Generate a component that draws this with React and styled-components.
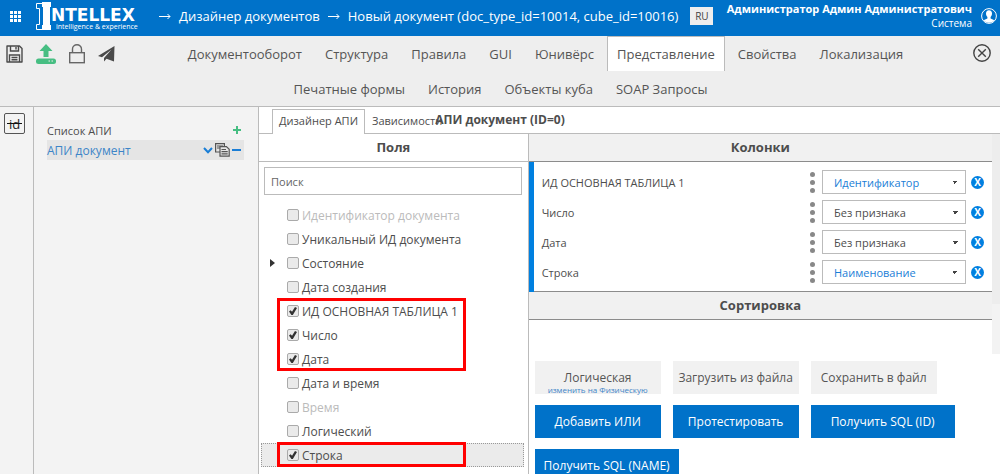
import { useState } from 'react';
import styled, { createGlobalStyle } from 'styled-components';

const navTop = ['Документооборот', 'Структура', 'Правила', 'GUI', 'Юнивёрс', 'Представление', 'Свойства', 'Локализация'];
const navBottom = ['Печатные формы', 'История', 'Объекты куба', 'SOAP Запросы'];

const fieldGroups = [
    {
        rows: [
            { name: 'Идентификатор документа', disabled: true },
            { name: 'Уникальный ИД документа' },
            { name: 'Состояние', expandable: true },
            { name: 'Дата создания' },
        ],
    },
    {
        marked: true,
        rows: [
            { name: 'ИД ОСНОВНАЯ ТАБЛИЦА 1', checked: true },
            { name: 'Число', checked: true },
            { name: 'Дата', checked: true },
        ],
    },
    {
        rows: [
            { name: 'Дата и время' },
            { name: 'Время', disabled: true },
            { name: 'Логический' },
        ],
    },
    {
        marked: true,
        rows: [{ name: 'Строка', checked: true, current: true }],
    },
];

const columns = [
    { name: 'ИД ОСНОВНАЯ ТАБЛИЦА 1', sign: 'Идентификатор' },
    { name: 'Число', sign: 'Без признака' },
    { name: 'Дата', sign: 'Без признака' },
    { name: 'Строка', sign: 'Наименование' },
];

const signs = ['Без признака', 'Идентификатор', 'Наименование'];

function LogoMark() {
    return (
        <svg width="15" height="28" viewBox="0 0 15 28" aria-hidden="true">
            <path d="M8 1.5H0.5V6.5H3.5V22.5H0.5V27.5H8" fill="none" stroke="#fff" strokeWidth="1" />
            <path d="M6 0H15V5H14V23H15V28H6V23H7V5H6Z" fill="#fff" />
        </svg>
    );
}

function SaveIcon() {
    return (
        <svg width="17" height="18" viewBox="0 0 17 18" fill="none" stroke="#4a4a4a" strokeWidth="1.4">
            <path d="M1 1H13.5L16 3.5V17H1Z" strokeLinejoin="round" />
            <path d="M4.5 1V6H12.5V1M10 2V4.5M3.5 17V10H13.5V17M5.5 12.5H11.5M5.5 14.7H11.5" />
        </svg>
    );
}

function UploadIcon() {
    return (
        <svg width="20" height="20" viewBox="0 0 20 20" fill="#46be82">
            <path d="M10 0L16.5 7H12.5V13H7.5V7H3.5Z" />
            <rect x="0" y="14.5" width="20" height="5.5" rx="2.5" />
            <path d="M12.5 17H14M15.5 17H17" stroke="#ededed" strokeWidth="1" />
        </svg>
    );
}

function LockIcon() {
    return (
        <svg width="16" height="20" viewBox="0 0 16 20" fill="none" stroke="#666" strokeWidth="1.4">
            <rect x="0.7" y="8.7" width="14.6" height="10" />
            <path d="M3.5 8.5V5A4.5 4.2 0 0 1 12.5 5V8.5" />
        </svg>
    );
}

function SendIcon() {
    return (
        <svg width="17" height="16" viewBox="0 0 17 16" fill="#4a4a4a">
            <path d="M16.5 0L0 10L4 11.2L13.5 3.5L6 12V15.5L8.5 12.7L16 15.5Z" />
        </svg>
    );
}

function CloseIcon() {
    return (
        <svg width="18" height="18" viewBox="0 0 18 18" fill="none" stroke="#444" strokeWidth="1.4">
            <circle cx="9" cy="9" r="8.2" />
            <path d="M5.2 5.2L12.8 12.8M12.8 5.2L5.2 12.8" />
        </svg>
    );
}

function UserIcon() {
    return (
        <svg width="16" height="16" viewBox="0 0 16 16">
            <circle cx="8" cy="8" r="7.4" fill="none" stroke="#fff" strokeWidth="1" />
            <path d="M8 2.2C10 2.2 11 3.6 11 5.6C11 7.2 10.4 8.4 9.6 9V10.4L13.4 12.2A7 7 0 0 1 2.6 12.2L6.4 10.4V9C5.6 8.4 5 7.2 5 5.6C5 3.6 6 2.2 8 2.2Z" fill="#fff" />
        </svg>
    );
}

function CopyIcon() {
    return (
        <svg width="15" height="14" viewBox="0 0 15 14" fill="#e5e5e5" stroke="#555" strokeWidth="1.2">
            <path d="M0.6 0.6H9.4V9H0.6Z" />
            <path d="M2 3H8M2 5H8" />
            <path d="M5 3.6H11.4L14.2 6.2V13.2H5Z" />
            <path d="M6.5 6.5H11M6.5 8.7H12.7M6.5 10.9H12.7" />
        </svg>
    );
}

function Arrow() {
    return (
        <svg width="12" height="7" viewBox="0 0 12 7" fill="none" stroke="#fff" strokeWidth="1">
            <path d="M0 3.5H11M8.5 1L11 3.5L8.5 6" />
        </svg>
    );
}

function App() {
    const [search, setSearch] = useState('');

    return (
        <Page>
            <GlobalStyle />
            <Header>
                <IconButton aria-label="Меню">
                    <svg width="12" height="11" viewBox="0 0 12 11" fill="#fff">
                        {[0, 4, 8].map((y) => [0, 4, 8].map((x) => (
                            <rect key={`${x}-${y}`} x={x} y={y} width="3" height="3" />
                        )))}
                    </svg>
                </IconButton>
                <Logo href="#">
                    <LogoMark />
                    <LogoText>
                        <LogoName>NTELLEX</LogoName>
                        <LogoSlogan>intelligence &amp; experience</LogoSlogan>
                    </LogoText>
                </Logo>
                <Crumbs>
                    <Arrow />
                    <a href="#">Дизайнер документов</a>
                    <Arrow />
                    <a href="#">Новый документ (doc_type_id=10014, cube_id=10016)</a>
                </Crumbs>
                <Language>RU</Language>
                <User>
                    <strong>Администратор Админ Администратович</strong>
                    <span>Система</span>
                </User>
                <UserIcon />
            </Header>

            <Toolbar>
                <Tools>
                    <IconButton aria-label="Сохранить"><SaveIcon /></IconButton>
                    <IconButton aria-label="Выгрузить"><UploadIcon /></IconButton>
                    <IconButton aria-label="Заблокировать"><LockIcon /></IconButton>
                    <IconButton aria-label="Отправить"><SendIcon /></IconButton>
                </Tools>
                <Nav>
                    <NavRow>
                        {navTop.map((item) => (
                            <NavLink key={item} href="#" $active={item === 'Представление'}>{item}</NavLink>
                        ))}
                    </NavRow>
                    <NavRow $second>
                        {navBottom.map((item) => (
                            <NavLink key={item} href="#">{item}</NavLink>
                        ))}
                    </NavRow>
                </Nav>
                <CloseBox>
                    <IconButton aria-label="Закрыть"><CloseIcon /></IconButton>
                </CloseBox>
            </Toolbar>

            <Body>
                <Rail>
                    <IdButton>id</IdButton>
                </Rail>
                <ApiPanel>
                    <ApiRow>
                        <span>Список АПИ</span>
                        <IconButton aria-label="Добавить">
                            <svg width="8" height="8" viewBox="0 0 8 8" stroke="#46be82" strokeWidth="2"><path d="M4 0V8M0 4H8" /></svg>
                        </IconButton>
                    </ApiRow>
                    <ApiRow $selected>
                        <a href="#">АПИ документ</a>
                        <ApiActions>
                            <IconButton aria-label="Раскрыть">
                                <svg width="10" height="7" viewBox="0 0 10 7" fill="none" stroke="#1a7ed6" strokeWidth="2"><path d="M1 1L5 5.3L9 1" /></svg>
                            </IconButton>
                            <IconButton aria-label="Копировать"><CopyIcon /></IconButton>
                            <IconButton aria-label="Удалить">
                                <svg width="9" height="2" viewBox="0 0 9 2"><rect width="9" height="2" fill="#1a7ed6" /></svg>
                            </IconButton>
                        </ApiActions>
                    </ApiRow>
                </ApiPanel>

                <Designer>
                    <Tabs>
                        <Tab $active>Дизайнер АПИ</Tab>
                        <Tab>Зависимости</Tab>
                        <Title>АПИ документ (ID=0)</Title>
                    </Tabs>
                    <Panes>
                        <Fields>
                            <PaneTitle>Поля</PaneTitle>
                            <Search
                                aria-label="Поиск"
                                placeholder="Поиск"
                                value={search}
                                onChange={(e) => setSearch(e.target.value)}
                            />
                            <FieldList>
                                {fieldGroups.map((group, i) => (
                                    <FieldGroup key={i}>
                                        {group.rows.map((row) => (
                                            <Field key={row.name} $current={row.current} $disabled={row.disabled}>
                                                <Expander>{row.expandable && <Triangle />}</Expander>
                                                <Checkbox type="checkbox" defaultChecked={row.checked} disabled={row.disabled} />
                                                {row.name}
                                            </Field>
                                        ))}
                                        {group.marked && <Frame />}
                                    </FieldGroup>
                                ))}
                            </FieldList>
                        </Fields>

                        <Settings>
                            <Scroller>
                                <ScrollContent>
                                    <PaneTitle $grey>Колонки</PaneTitle>
                                    <ColumnList>
                                        {columns.map((column) => (
                                            <Column key={column.name}>
                                                <ColumnName htmlFor={column.name}>{column.name}</ColumnName>
                                                <Grip><i /><i /><i /></Grip>
                                                <Select id={column.name} defaultValue={column.sign} $set={column.sign !== 'Без признака'}>
                                                    {signs.map((sign) => <option key={sign}>{sign}</option>)}
                                                </Select>
                                                <Remove aria-label="Убрать колонку">X</Remove>
                                            </Column>
                                        ))}
                                    </ColumnList>
                                    <PaneTitle $grey>Сортировка</PaneTitle>
                                </ScrollContent>
                                <ScrollTrack><ScrollThumb /></ScrollTrack>
                            </Scroller>
                            <Actions>
                                <Action>
                                    Логическая
                                    <Hint>изменить на Физическую</Hint>
                                </Action>
                                <Action>Загрузить из файла</Action>
                                <Action>Сохранить в файл</Action>
                                <Action $primary>Добавить ИЛИ</Action>
                                <Action $primary>Протестировать</Action>
                                <Action $primary $wide>Получить SQL (ID)</Action>
                                <Action $primary $wide>Получить SQL (NAME)</Action>
                            </Actions>
                        </Settings>
                    </Panes>
                </Designer>
            </Body>
        </Page>
    );
}

export default App;

const GlobalStyle = createGlobalStyle`
    * {
        box-sizing: border-box;
    }
    body {
        margin: 0;
        overflow: hidden;
        background: white;
        color: #4d4d4d;
        font-family: 'Open Sans', sans-serif;
        font-size: 12px;
    }
    button, input, select {
        font-family: inherit;
        color: inherit;
    }
    a {
        color: inherit;
        text-decoration: none;
    }
    svg {
        display: block;
        flex: none;
    }
`;

const Page = styled.div`
    display: flex;
    flex-direction: column;
    height: 100vh;
`;

const Header = styled.header`
    display: flex;
    align-items: center;
    flex: none;
    height: 36px;
    padding: 0 3px 4px 10px;
    background: #0072c9;
    color: white;
`;

const IconButton = styled.button`
    display: flex;
    padding: 0;
    border: none;
    background: none;
    cursor: pointer;
`;

const Logo = styled.a`
    display: flex;
    margin-left: 14px;
`;

const LogoText = styled.span`
    display: flex;
    flex-direction: column;
    width: 86px;
    padding-top: 5px;
    white-space: nowrap;
`;

const LogoName = styled.span`
    font-family: 'DejaVu Sans', sans-serif;
    font-size: 17px;
    font-weight: bold;
    line-height: 16px;
`;

const LogoSlogan = styled.span`
    padding-left: 5px;
    font-size: 7px;
    line-height: 8px;
`;

const Crumbs = styled.nav`
    display: flex;
    align-items: center;
    gap: 8px;
    margin-left: 22px;
    font-size: 13px;
    white-space: nowrap;
`;

const Language = styled.button`
    flex: none;
    width: 23px;
    height: 18px;
    margin-left: 12px;
    padding: 0;
    border: none;
    background: #eee;
    color: #444;
    font-size: 10px;
`;

const User = styled.div`
    display: flex;
    flex-direction: column;
    align-items: flex-end;
    flex: 1;
    margin-right: 9px;
    font-size: 11px;
    line-height: 15px;
    white-space: nowrap;

    span {
        font-size: 10px;
    }
`;

const Toolbar = styled.div`
    display: flex;
    flex: none;
    background: #eee;
    border-bottom: 1px solid #bbb;
`;

const Tools = styled.div`
    display: flex;
    align-items: center;
    gap: 13px;
    width: 118px;
    height: 35px;
    padding-left: 6px;
`;

const Nav = styled.nav`
    flex: 1;
`;

const NavRow = styled.div`
    display: flex;
    justify-content: center;
    gap: 3px;
    height: 35px;
    padding-right: ${({ $second }) => ($second ? 90 : 0)}px;
`;

const NavLink = styled.a`
    display: flex;
    align-items: center;
    padding: 0 9px;
    border: 1px solid ${({ $active }) => ($active ? '#bbb' : 'transparent')};
    border-bottom: none;
    background: ${({ $active }) => ($active ? 'white' : 'none')};
    color: #555;
    font-size: 13px;
`;

const CloseBox = styled.div`
    display: flex;
    align-items: center;
    height: 33px;
    padding-right: 9px;
`;

const Body = styled.main`
    display: flex;
    flex: 1;
    min-height: 0;
`;

const Rail = styled.aside`
    flex: none;
    width: 34px;
    padding: 6px 4px;
    border-right: 1px solid #bbb;
    background: #f3f3f3;
`;

const IdButton = styled.button`
    position: relative;
    width: 21px;
    height: 21px;
    padding: 0;
    border: 1px solid #555;
    border-radius: 2px;
    background: none;
    color: #222;
    font-size: 13px;
    line-height: 18px;

    &::after {
        content: '';
        position: absolute;
        inset: 9px 2px auto;
        height: 1px;
        background: #111;
    }
`;

const ApiPanel = styled.aside`
    flex: none;
    width: 225px;
    padding: 13px 14px 0 13px;
    border-right: 1px solid #bbb;
    background: #f3f3f3;
`;

const ApiRow = styled.div`
    display: flex;
    align-items: center;
    justify-content: space-between;
    height: 20px;
    padding-right: 3px;
    background: ${({ $selected }) => ($selected ? '#e5e5e5' : 'none')};
    color: ${({ $selected }) => ($selected ? '#3d85c8' : '#4d4d4d')};
    font-size: ${({ $selected }) => ($selected ? 12 : 11)}px;
`;

const ApiActions = styled.div`
    display: flex;
    align-items: center;
    gap: 2px;
`;

const Designer = styled.section`
    display: flex;
    flex-direction: column;
    flex: 1;
    min-width: 0;
`;

const Tabs = styled.div`
    display: flex;
    flex: none;
    height: 27px;
    padding: 2px 0 0 13px;
    border-bottom: 1px solid #bbb;
`;

const Tab = styled.button`
    height: 25px;
    padding: 0 6px 4px;
    border: 1px solid ${({ $active }) => ($active ? '#bbb' : 'transparent')};
    border-bottom: none;
    background: ${({ $active }) => ($active ? 'white' : 'none')};
    font-size: 11px;
`;

const Title = styled.h1`
    margin: 0 0 0 -14px;
    font-size: 12px;
    line-height: 22px;
`;

const Panes = styled.div`
    display: flex;
    flex: 1;
    min-height: 0;
`;

const Fields = styled.section`
    flex: 269;
    min-width: 0;
    border-right: 1px solid #bbb;
`;

const PaneTitle = styled.h2`
    height: 28px;
    margin: 0;
    border-bottom: 1px solid ${({ $grey }) => ($grey ? '#8c8c8c' : '#bbb')};
    background: ${({ $grey }) => ($grey ? '#f1f1f1' : 'white')};
    font-size: 13px;
    line-height: 27px;
    text-align: center;
`;

const Search = styled.input`
    display: block;
    width: calc(100% - 11px);
    height: 28px;
    margin: 5px;
    padding: 0 6px;
    border: 1px solid #bbb;
    font-size: 11px;

    &::placeholder {
        color: #666;
    }
`;

const FieldList = styled.div`
    padding: 3px 4px 0 2px;
`;

const FieldGroup = styled.div`
    position: relative;
`;

const Field = styled.label`
    display: flex;
    align-items: center;
    height: 24px;
    border: 1px dotted ${({ $current }) => ($current ? '#999' : 'transparent')};
    background: ${({ $current }) => ($current ? '#ebebeb' : 'none')};
    color: ${({ $disabled }) => ($disabled ? '#bbb' : '#4d4d4d')};
`;

const Expander = styled.span`
    width: 25px;
    padding-left: 8px;
`;

const Triangle = styled.span`
    display: block;
    width: 0;
    border: 4px solid transparent;
    border-left: 5px solid #333;
    border-right: none;
`;

const Checkbox = styled.input`
    appearance: none;
    width: 12px;
    height: 12px;
    margin: 0 3px 0 0;
    border: 1px solid #aaa;
    border-radius: 2px;
    background: #eaeaea;

    &:checked::before {
        content: '';
        display: block;
        width: 8px;
        height: 8px;
        margin: 1px;
        background: #333;
        clip-path: polygon(0 55%, 20% 40%, 38% 60%, 75% 0, 100% 12%, 48% 100%, 30% 100%);
    }
`;

const Frame = styled.div`
    position: absolute;
    inset: -1px 58px 0 16px;
    border: 3px solid #f00;
    pointer-events: none;
`;

const Settings = styled.section`
    flex: 472;
    min-width: 0;
`;

const Scroller = styled.div`
    display: flex;
    height: 220px;
`;

const ScrollContent = styled.div`
    flex: 1;
`;

const ScrollTrack = styled.div`
    width: 8px;
    background: #f3f3f3;
`;

const ScrollThumb = styled.div`
    height: 170px;
    background: #ededed;
`;

const ColumnList = styled.div`
    display: flex;
    flex-direction: column;
    gap: 6px;
    padding: 8px;
    border-left: 5px solid #0080e0;
    box-shadow: inset 0 -1px #8c8c8c;
`;

const Column = styled.div`
    display: flex;
    align-items: center;
    height: 24px;
`;

const ColumnName = styled.label`
    flex: 1;
    font-size: 11px;
`;

const Grip = styled.span`
    display: flex;
    flex-direction: column;
    gap: 3px;
    margin-right: 7px;

    i {
        width: 5px;
        height: 5px;
        border-radius: 50%;
        background: #888;
    }
`;

const Select = styled.select`
    appearance: none;
    width: 144px;
    height: 24px;
    padding: 0 11px;
    border: 1px solid #bbb;
    background:
        linear-gradient(to bottom left, #444 50%, transparent 50%) no-repeat right 10px center / 3px 3px,
        linear-gradient(to bottom right, #444 50%, transparent 50%) no-repeat right 7px center / 3px 3px,
        white;
    color: ${({ $set }) => ($set ? '#1a7ed6' : '#4d4d4d')};
    font-size: 11px;
`;

const Remove = styled.button`
    width: 13px;
    height: 13px;
    margin-left: 5px;
    padding: 0;
    border: none;
    border-radius: 50%;
    background: #0080e0;
    color: white;
    font-size: 10px;
    font-weight: bold;
    line-height: 13px;
`;

const Actions = styled.div`
    display: flex;
    flex-wrap: wrap;
    gap: 11px 12px;
    padding: 7px 40px 0 6px;
`;

const Action = styled.button`
    display: flex;
    flex-direction: column;
    align-items: center;
    justify-content: center;
    width: ${({ $wide }) => ($wide ? 144 : 126)}px;
    height: 33px;
    padding: 0;
    border: none;
    background: ${({ $primary }) => ($primary ? '#0072c9' : '#f1f1f1')};
    color: ${({ $primary }) => ($primary ? 'white' : '#555')};
    font-size: 12px;
    font-weight: ${({ $primary }) => ($primary ? 500 : 400)};
    white-space: nowrap;
`;

const Hint = styled.span`
    margin-bottom: -8px;
    color: #3d85c8;
    font-size: 8px;
    line-height: 8px;
`;
